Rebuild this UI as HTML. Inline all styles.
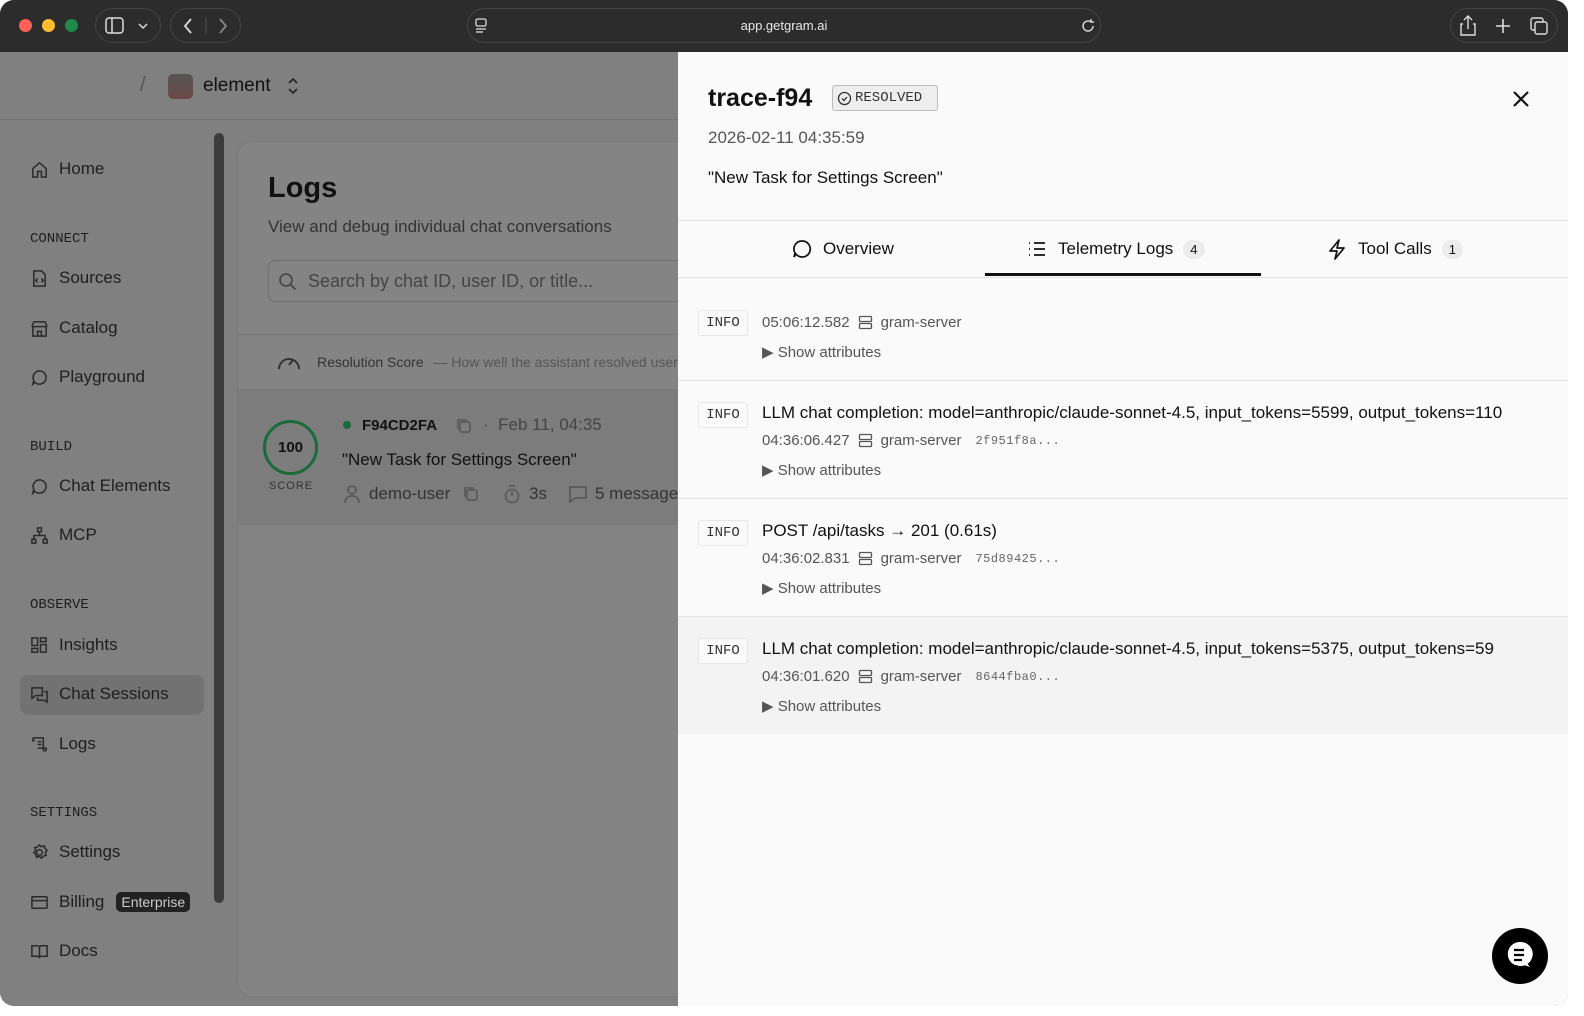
<!DOCTYPE html>
<html><head><meta charset="utf-8"><style>
*{box-sizing:border-box;margin:0;padding:0}
body{width:1584px;height:1016px;background:#fff;font-family:"Liberation Sans",sans-serif;overflow:hidden;position:relative}
.win{position:absolute;left:0;top:0;width:1568px;height:1006px;border-radius:14px;overflow:hidden;background:#7f7f7f}
.tb{position:absolute;left:0;top:0;width:100%;height:52px;background:#2c2c2c}
.dot{position:absolute;top:19px;width:13px;height:13px;border-radius:50%}
.pill{position:absolute;top:8px;height:35px;border:1px solid #444;border-radius:18px}
.url{position:absolute;left:467px;top:8px;width:634px;height:35px;border:1px solid #444;border-radius:18px;color:#e8e8e8;font-size:13px;text-align:center;line-height:33px}
.left{position:absolute;left:0;top:52px;width:678px;height:954px;background:#808080}
.hdr{position:absolute;left:0;top:0;width:678px;height:68px;border-bottom:1px solid #737373}
.side .it{position:absolute;left:30px;font-size:17px;color:#1e1e1e;display:flex;align-items:center;gap:10px}
.side .sec{position:absolute;left:30px;font-family:"Liberation Mono",monospace;font-size:14px;color:#1e1e1e}
.ic{width:19px;height:19px;fill:none;stroke:#2a2a2a;stroke-width:1.6}
.card{position:absolute;left:237px;top:89px;width:480px;height:856px;background:#848484;border-radius:16px;border:1px solid #7a7a7a}
.panel{position:absolute;left:678px;top:52px;width:890px;height:954px;background:#fafafa}
.row{position:absolute;left:0;width:890px;border-bottom:1px solid #e2e2e2}
.info{position:absolute;left:20px;width:50px;height:26px;border:1px solid #e6e6e6;border-radius:3px;font-family:"Liberation Mono",monospace;font-size:14px;color:#333;text-align:center;line-height:24px;background:#fafafa}
.msg{position:absolute;left:84px;font-size:17px;color:#111}
.meta{position:absolute;left:84px;font-size:15px;color:#555;display:flex;align-items:center;gap:8px}
.meta .h{font-family:"Liberation Mono",monospace;font-size:12px;color:#666;margin-left:6px;letter-spacing:.5px}
.sa{position:absolute;left:84px;font-size:15px;color:#555}
.tab{position:absolute;top:186px;font-size:17px;color:#111;display:flex;align-items:center;gap:10px}
.badge{background:#ececec;border-radius:10px;font-size:13px;padding:2px 7px}
.s{position:absolute;fill:none;stroke:#555;stroke-width:1.5}
</style></head><body>
<div class="win">
<div class="tb">
<div class="dot" style="left:19px;background:#fe5f57"></div>
<div class="dot" style="left:42px;background:#febc2e"></div>
<div class="dot" style="left:65px;background:#1f8a4a"></div>
<div class="pill" style="left:95px;width:66px"></div>
<svg style="position:absolute;left:105px;top:17px" width="46" height="18"><rect x="1" y="1" width="17" height="15" rx="3" fill="none" stroke="#ddd" stroke-width="1.5"/><line x1="7" y1="1" x2="7" y2="16" stroke="#ddd" stroke-width="1.5"/><path d="M34 7l4 4 4-4" stroke="#ddd" fill="none" stroke-width="1.5"/></svg>
<div class="pill" style="left:170px;width:71px"></div>
<svg style="position:absolute;left:180px;top:16px" width="54" height="20"><path d="M11 3l-6 7 6 7" stroke="#ddd" fill="none" stroke-width="1.8"/><line x1="26" y1="2" x2="26" y2="18" stroke="#555"/><path d="M40 3l6 7-6 7" stroke="#888" fill="none" stroke-width="1.8"/></svg>
<div class="url">app.getgram.ai</div>
<svg style="position:absolute;left:474px;top:18px" width="14" height="16"><rect x="2" y="1" width="10" height="7" rx="1.5" fill="none" stroke="#ddd" stroke-width="1.3"/><line x1="2" y1="11" x2="12" y2="11" stroke="#ddd" stroke-width="1.3"/><line x1="2" y1="14" x2="9" y2="14" stroke="#ddd" stroke-width="1.3"/></svg>
<svg style="position:absolute;left:1080px;top:18px" width="16" height="16"><path d="M13 8a5 5 0 1 1-2-4" fill="none" stroke="#ddd" stroke-width="1.4"/><path d="M11 1v3h3" fill="none" stroke="#ddd" stroke-width="1.4"/></svg>
<div class="pill" style="left:1450px;width:108px"></div>
<svg style="position:absolute;left:1458px;top:14px" width="96" height="24"><path d="M5 10h-2v11h14v-11h-2M10 15v-13M6 6l4-4 4 4" fill="none" stroke="#ddd" stroke-width="1.4"/><path d="M45 5v14M38 12h14" stroke="#ddd" stroke-width="1.6"/><rect x="73" y="4" width="12" height="12" rx="2" fill="none" stroke="#ddd" stroke-width="1.4"/><rect x="77" y="8" width="12" height="12" rx="2" fill="#2c2c2c" stroke="#ddd" stroke-width="1.4"/></svg>
</div>

<div class="left">
<div class="hdr">
<div style="position:absolute;left:140px;top:22px;font-size:20px;color:#555">/</div>
<div style="position:absolute;left:168px;top:22px;width:25px;height:25px;border-radius:5px;background:linear-gradient(#555,#6a4a48)"></div>
<div style="position:absolute;left:203px;top:23px;font-size:19px;color:#111">element</div>
<svg style="position:absolute;left:286px;top:24px" width="14" height="20"><path d="M3 7l4-4 4 4M3 13l4 4 4-4" fill="none" stroke="#222" stroke-width="1.6"/></svg>
</div>
<div class="side">
<div class="it" style="top:107px"><svg class="ic" viewBox="0 0 20 20"><path d="M3 9l7-6 7 6v9h-5v-6h-4v6H3z"/></svg>Home</div>
<div class="sec" style="top:179px">CONNECT</div>
<div class="it" style="top:216px"><svg class="ic" viewBox="0 0 20 20"><path d="M4 2h8l4 4v12H4zM8 10l-2 2 2 2M12 10l2 2-2 2"/></svg>Sources</div>
<div class="it" style="top:266px"><svg class="ic" viewBox="0 0 20 20"><path d="M3 8h14v10H3zM2 8l2-5h12l2 5M8 18v-5h4v5"/></svg>Catalog</div>
<div class="it" style="top:315px"><svg class="ic" viewBox="0 0 20 20"><path d="M10 3a7 7 0 1 1-5 12l-2 2 1-4a7 7 0 0 1 6-10z"/></svg>Playground</div>
<div class="sec" style="top:387px">BUILD</div>
<div class="it" style="top:424px"><svg class="ic" viewBox="0 0 20 20"><path d="M10 3a7 7 0 1 1-5 12l-2 2 1-4a7 7 0 0 1 6-10z"/></svg>Chat Elements</div>
<div class="it" style="top:473px"><svg class="ic" viewBox="0 0 20 20"><rect x="8" y="2" width="4" height="4"/><rect x="2" y="14" width="4" height="4"/><rect x="14" y="14" width="4" height="4"/><path d="M10 6v4M4 14v-4h12v4"/></svg>MCP</div>
<div class="sec" style="top:545px">OBSERVE</div>
<div class="it" style="top:583px"><svg class="ic" viewBox="0 0 20 20"><rect x="2" y="2" width="6" height="8"/><rect x="11" y="2" width="6" height="4"/><rect x="2" y="13" width="6" height="4"/><rect x="11" y="9" width="6" height="8"/></svg>Insights</div>
<div style="position:absolute;left:20px;top:623px;width:184px;height:40px;background:#727272;border-radius:8px"></div>
<div class="it" style="top:632px"><svg class="ic" viewBox="0 0 20 20"><path d="M2 3h11v8H6l-4 3zM15 7h3v11l-3-2H8v-3"/></svg>Chat Sessions</div>
<div class="it" style="top:682px"><svg class="ic" viewBox="0 0 20 20"><path d="M3 3h11v13a2 2 0 0 0 3 0v-2H8M3 3v3h2M8 7h4M8 10h4"/></svg>Logs</div>
<div class="sec" style="top:753px">SETTINGS</div>
<div class="it" style="top:790px"><svg class="ic" viewBox="0 0 20 20"><circle cx="10" cy="10" r="3"/><path d="M10 2l2 2 3-1 1 3 2 2-2 2 1 3-3 1-2 2-2-2-3 1-1-3-2-2 2-2-1-3 3-1z"/></svg>Settings</div>
<div class="it" style="top:840px"><svg class="ic" viewBox="0 0 20 20"><rect x="2" y="4" width="16" height="12" rx="1"/><path d="M2 8h16"/></svg>Billing<span style="background:#222;color:#ccc;font-size:14px;padding:2px 5px;border-radius:5px;margin-left:2px">Enterprise</span></div>
<div class="it" style="top:889px"><svg class="ic" viewBox="0 0 20 20"><path d="M2 4h6a2 2 0 0 1 2 2v11a2 2 0 0 0-2-2H2zM18 4h-6a2 2 0 0 0-2 2v11a2 2 0 0 1 2-2h6z"/></svg>Docs</div>
</div>
<div style="position:absolute;left:214px;top:81px;width:10px;height:770px;background:#3c3c3c;border-radius:5px"></div>
<div class="card">
<div style="position:absolute;left:30px;top:30px;font-size:29px;font-weight:bold;color:#111">Logs</div>
<div style="position:absolute;left:30px;top:75px;font-size:17px;color:#333">View and debug individual chat conversations</div>
<div style="position:absolute;left:30px;top:118px;width:460px;height:42px;border:1px solid #6f6f6f;border-radius:7px"></div>
<svg style="position:absolute;left:40px;top:130px" width="20" height="20"><circle cx="8" cy="8" r="6" fill="none" stroke="#444" stroke-width="1.6"/><path d="M12.5 12.5l5 5" stroke="#444" stroke-width="1.6"/></svg>
<div style="position:absolute;left:70px;top:129px;font-size:18px;color:#444">Search by chat ID, user ID, or title...</div>
<div style="position:absolute;left:0;top:192px;width:480px;height:56px;border-top:1px solid #777;border-bottom:1px solid #777"></div>
<svg style="position:absolute;left:38px;top:209px" width="26" height="20"><path d="M3 18a10 10 0 1 1 20 0" fill="none" stroke="#333" stroke-width="2"/><path d="M13 14l4-5" stroke="#333" stroke-width="2"/></svg>
<div style="position:absolute;left:79px;top:212px;font-size:14px;color:#333;white-space:nowrap">Resolution Score <span style="color:#555;margin-left:6px">— How well the assistant resolved user</span></div>
<div style="position:absolute;left:0;top:248px;width:480px;height:135px;background:#7c7c7c"></div>
<div style="position:absolute;left:25px;top:278px;width:55px;height:55px;border-radius:50%;border:3px solid #1a6a3c;font-size:15px;font-weight:bold;text-align:center;line-height:49px;color:#111">100</div>
<div style="position:absolute;left:31px;top:338px;font-size:11px;color:#333;letter-spacing:1px">SCORE</div>
<div style="position:absolute;left:105px;top:279px;width:8px;height:8px;border-radius:50%;background:#1a6a3c"></div>
<div style="position:absolute;left:124px;top:275px;font-size:15px;font-weight:bold;color:#111;white-space:nowrap">F94CD2FA</div>
<svg class="s" style="left:217px;top:275px" width="18" height="18"><rect x="5" y="5" width="10" height="10" rx="2"/><path d="M3 12V3h9"/></svg>
<div style="position:absolute;left:245px;top:273px;font-size:17px;color:#444;white-space:nowrap">·&nbsp; Feb 11, 04:35</div>
<div style="position:absolute;left:104px;top:308px;font-size:17px;color:#111;white-space:nowrap">"New Task for Settings Screen"</div>
<svg class="s" style="left:105px;top:342px" width="18" height="20"><circle cx="9" cy="6" r="4"/><path d="M2 19c0-5 3-7 7-7s7 2 7 7"/></svg>
<div style="position:absolute;left:131px;top:342px;font-size:17px;color:#333">demo-user</div>
<svg class="s" style="left:224px;top:343px" width="18" height="18"><rect x="5" y="5" width="10" height="10" rx="2"/><path d="M3 12V3h9"/></svg>
<svg class="s" style="left:265px;top:342px" width="18" height="20"><circle cx="9" cy="12" r="6.5"/><path d="M9 12V8M6 2h6"/></svg>
<div style="position:absolute;left:291px;top:342px;font-size:17px;color:#333">3s</div>
<svg class="s" style="left:330px;top:342px" width="20" height="20"><path d="M2 3h16v11H7l-5 4z"/></svg>
<div style="position:absolute;left:357px;top:342px;font-size:17px;color:#333;white-space:nowrap">5 messages</div>
</div>
</div>

<div class="panel">
<div style="position:absolute;left:30px;top:32px;font-size:25px;font-weight:bold;color:#111">trace-f94</div>
<div style="position:absolute;left:154px;top:33px;width:106px;height:26px;border:1px solid #bbb;background:#eee;border-radius:3px;font-family:'Liberation Mono',monospace;font-size:14px;color:#333;line-height:24px;padding-left:22px">RESOLVED</div>
<svg style="position:absolute;left:159px;top:39px" width="15" height="15"><circle cx="7.5" cy="7.5" r="6" fill="none" stroke="#333" stroke-width="1.3"/><path d="M5 7.5l2 2 3-3.5" fill="none" stroke="#333" stroke-width="1.3"/></svg>
<svg style="position:absolute;left:834px;top:38px" width="18" height="18"><path d="M2 2l14 14M16 2L2 16" stroke="#111" stroke-width="2.2"/></svg>
<div style="position:absolute;left:30px;top:76px;font-size:17px;color:#555">2026-02-11 04:35:59</div>
<div style="position:absolute;left:30px;top:116px;font-size:17px;color:#111">"New Task for Settings Screen"</div>
<div style="position:absolute;left:0;top:168px;width:890px;border-top:1px solid #e2e2e2"></div>
<div class="tab" style="left:113px"><svg width="22" height="22" viewBox="0 0 22 22"><path d="M11 3a8 8 0 1 1-6 13l-2 3 1-4a8 8 0 0 1 7-12z" fill="none" stroke="#111" stroke-width="1.7"/></svg>Overview</div>
<div class="tab" style="left:348px"><svg width="22" height="22"><path d="M3 5h1M3 11h1M3 17h1M8 5h11M8 11h11M8 17h11" stroke="#111" stroke-width="1.8"/></svg>Telemetry Logs <span class="badge">4</span></div>
<div class="tab" style="left:648px"><svg width="22" height="22"><path d="M13 2L4 13h7l-2 8 9-11h-7z" fill="none" stroke="#111" stroke-width="1.7" stroke-linejoin="round"/></svg>Tool Calls <span class="badge">1</span></div>
<div style="position:absolute;left:307px;top:221px;width:276px;height:3px;background:#111"></div>
<div style="position:absolute;left:0;top:225px;width:890px;border-top:1px solid #e2e2e2"></div>

<div class="row" style="top:226px;height:103px">
<div class="info" style="top:32px">INFO</div>
<div class="meta" style="top:36px">05:06:12.582 <svg width="15" height="15"><rect x="1.5" y="1.5" width="12" height="5" rx="1" fill="none" stroke="#555" stroke-width="1.3"/><rect x="1.5" y="8.5" width="12" height="5" rx="1" fill="none" stroke="#555" stroke-width="1.3"/></svg>gram-server</div>
<div class="sa" style="top:65px">▶ Show attributes</div>
</div>
<div class="row" style="top:329px;height:118px">
<div class="info" style="top:21px">INFO</div>
<div class="msg" style="top:22px">LLM chat completion: model=anthropic/claude-sonnet-4.5, input_tokens=5599, output_tokens=110</div>
<div class="meta" style="top:51px">04:36:06.427 <svg width="15" height="15"><rect x="1.5" y="1.5" width="12" height="5" rx="1" fill="none" stroke="#555" stroke-width="1.3"/><rect x="1.5" y="8.5" width="12" height="5" rx="1" fill="none" stroke="#555" stroke-width="1.3"/></svg>gram-server <span class="h">2f951f8a...</span></div>
<div class="sa" style="top:80px">▶ Show attributes</div>
</div>
<div class="row" style="top:447px;height:118px">
<div class="info" style="top:21px">INFO</div>
<div class="msg" style="top:22px">POST /api/tasks → 201 (0.61s)</div>
<div class="meta" style="top:51px">04:36:02.831 <svg width="15" height="15"><rect x="1.5" y="1.5" width="12" height="5" rx="1" fill="none" stroke="#555" stroke-width="1.3"/><rect x="1.5" y="8.5" width="12" height="5" rx="1" fill="none" stroke="#555" stroke-width="1.3"/></svg>gram-server <span class="h">75d89425...</span></div>
<div class="sa" style="top:80px">▶ Show attributes</div>
</div>
<div class="row" style="top:565px;height:117px;background:#f3f3f3;border-bottom:none">
<div class="info" style="top:21px">INFO</div>
<div class="msg" style="top:22px">LLM chat completion: model=anthropic/claude-sonnet-4.5, input_tokens=5375, output_tokens=59</div>
<div class="meta" style="top:51px">04:36:01.620 <svg width="15" height="15"><rect x="1.5" y="1.5" width="12" height="5" rx="1" fill="none" stroke="#555" stroke-width="1.3"/><rect x="1.5" y="8.5" width="12" height="5" rx="1" fill="none" stroke="#555" stroke-width="1.3"/></svg>gram-server <span class="h">8644fba0...</span></div>
<div class="sa" style="top:80px">▶ Show attributes</div>
</div>
<div style="position:absolute;left:814px;top:876px;width:56px;height:56px;border-radius:50%;background:#000"></div>
<svg style="position:absolute;left:814px;top:876px" width="56" height="56"><path d="M28 14a12 12 0 1 1-4 23l-1 0a12 12 0 0 1 5-23z M34 34l4 5-6-2z" fill="#fff"/><path d="M22 22h10M22 27h10M22 32h8" stroke="#000" stroke-width="2.2"/></svg>
</div>
</div>
</body></html>
